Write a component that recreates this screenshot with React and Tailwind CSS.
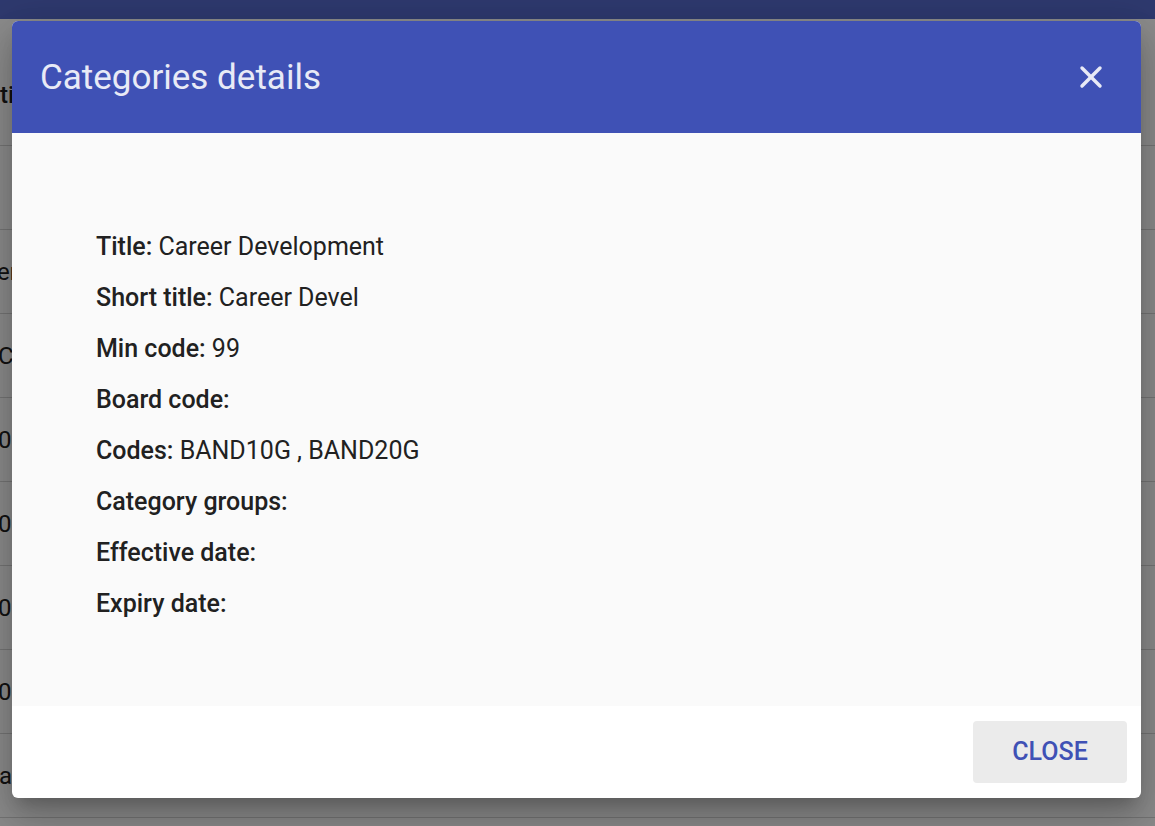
import React from 'react';
import { X } from 'lucide-react';

// fragments of the table that peek out on the left of the dialog
const rows = [
  { text: '', shift: '' },
  { text: 'er', shift: '-ml-[3px]' },
  { text: 'Cr', shift: '-ml-[2px]' },
  { text: '0', shift: '-ml-[2px]' },
  { text: '0', shift: '-ml-[2px]' },
  { text: '0', shift: '-ml-[2px]' },
  { text: '0', shift: '-ml-[2px]' },
  { text: 'a', shift: '-ml-[1px]' },
];

const details = [
  { label: 'Title:', value: 'Career Development' },
  { label: 'Short title:', value: 'Career Devel' },
  { label: 'Min code:', value: '99' },
  { label: 'Board code:', value: '' },
  { label: 'Codes:', value: 'BAND10G , BAND20G' },
  { label: 'Category groups:', value: '' },
  { label: 'Effective date:', value: '' },
  { label: 'Expiry date:', value: '' },
];

export default function App() {
  return (
    <div className="relative w-[1155px] h-[826px] overflow-hidden bg-white font-['Roboto',sans-serif]">
      {/* page behind the dialog */}
      <div className="h-[19px] bg-[#5469c8]" />
      <div className="h-[127px] flex items-center pt-[26px] border-b border-[#d6d6d6] text-[24px] font-medium text-[#212121]">
        <div className="w-[12px] overflow-hidden">
          <span className="block whitespace-nowrap">ti</span>
        </div>
      </div>
      <div className="flex flex-col">
        {rows.map((r, i) => (
          <div
            key={i}
            className="h-[84px] flex items-center border-b border-[#d6d6d6] text-[24px] text-[#212121]"
          >
            <div className="w-[12px] overflow-hidden">
              <span className={`block whitespace-nowrap ${r.shift}`}>{r.text}</span>
            </div>
          </div>
        ))}
      </div>

      {/* backdrop */}
      <div className="absolute inset-0 bg-[rgba(0,0,0,0.45)]" />

      {/* dialog */}
      <div className="absolute left-[12px] top-[21px] w-[1129px] h-[777px] flex flex-col bg-white rounded-[6px] overflow-hidden shadow-[0_11px_15px_-7px_rgba(0,0,0,0.2),0_24px_38px_3px_rgba(0,0,0,0.14),0_9px_46px_8px_rgba(0,0,0,0.12)]">
        <div className="h-[112px] shrink-0 flex items-center justify-between bg-[#3f51b5] pl-[28px] pr-[32px]">
          <h2 className="text-[35px] text-[#e8eaf6] font-normal pt-[2px]">Categories details</h2>
          <X className="w-[36px] h-[36px] text-[#e8eaf6]" strokeWidth={2.3} />
        </div>
        <div className="h-[573px] shrink-0 bg-[#fafafa] pl-[84px] pt-[99px] flex flex-col gap-[21px] text-[25px] text-[#212121] leading-[30px]">
          {details.map((d) => (
            <p key={d.label}>
              <span className="font-medium">{d.label}</span>
              {d.value ? ' ' + d.value : ''}
            </p>
          ))}
        </div>
        <div className="flex-1 flex items-center justify-end pr-[14px]">
          <button className="w-[154px] h-[62px] rounded-[4px] bg-[#ebebeb] text-[#3f51b5] text-[25px] font-medium">
            CLOSE
          </button>
        </div>
      </div>
    </div>
  );
}
